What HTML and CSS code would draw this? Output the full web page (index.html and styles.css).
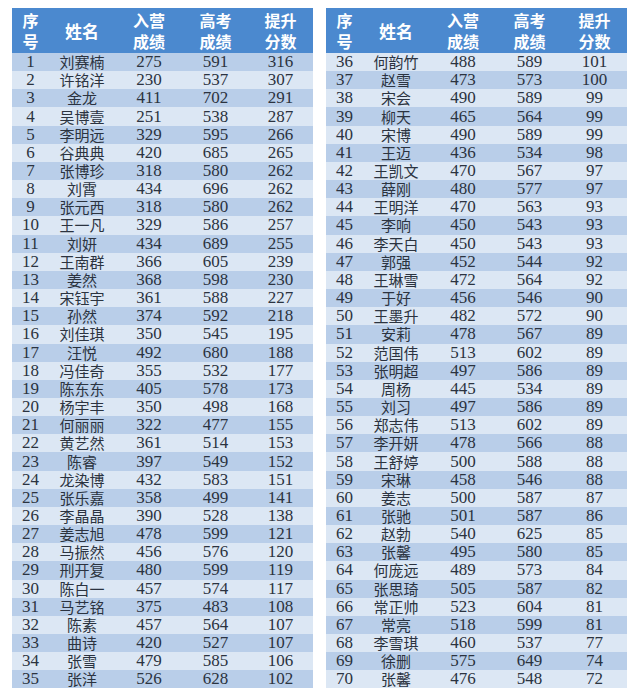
FILE: index.html
```html
<!DOCTYPE html>
<html lang="zh">
<head>
<meta charset="utf-8">
<link rel="stylesheet" href="styles.css">
</head>
<body>
<div class="page">
<table class="tbl">
<colgroup><col class="c1"><col class="c2"><col class="c3"><col class="c4"><col class="c5"></colgroup>
<thead><tr><th>序<br>号</th><th class="one">姓名</th><th>入营<br>成绩</th><th>高考<br>成绩</th><th>提升<br>分数</th></tr></thead>
<tbody>
<tr class="odd"><td>1</td><td class="nm">刘赛楠</td><td>275</td><td>591</td><td>316</td></tr>
<tr><td>2</td><td class="nm">许铭洋</td><td>230</td><td>537</td><td>307</td></tr>
<tr class="odd"><td>3</td><td class="nm">金龙</td><td>411</td><td>702</td><td>291</td></tr>
<tr><td>4</td><td class="nm">吴博壹</td><td>251</td><td>538</td><td>287</td></tr>
<tr class="odd"><td>5</td><td class="nm">李明远</td><td>329</td><td>595</td><td>266</td></tr>
<tr><td>6</td><td class="nm">谷典典</td><td>420</td><td>685</td><td>265</td></tr>
<tr class="odd"><td>7</td><td class="nm">张博珍</td><td>318</td><td>580</td><td>262</td></tr>
<tr><td>8</td><td class="nm">刘霄</td><td>434</td><td>696</td><td>262</td></tr>
<tr class="odd"><td>9</td><td class="nm">张元西</td><td>318</td><td>580</td><td>262</td></tr>
<tr><td>10</td><td class="nm">王一凡</td><td>329</td><td>586</td><td>257</td></tr>
<tr class="odd"><td>11</td><td class="nm">刘妍</td><td>434</td><td>689</td><td>255</td></tr>
<tr><td>12</td><td class="nm">王南群</td><td>366</td><td>605</td><td>239</td></tr>
<tr class="odd"><td>13</td><td class="nm">姜然</td><td>368</td><td>598</td><td>230</td></tr>
<tr><td>14</td><td class="nm">宋钰宇</td><td>361</td><td>588</td><td>227</td></tr>
<tr class="odd"><td>15</td><td class="nm">孙然</td><td>374</td><td>592</td><td>218</td></tr>
<tr><td>16</td><td class="nm">刘佳琪</td><td>350</td><td>545</td><td>195</td></tr>
<tr class="odd"><td>17</td><td class="nm">汪悦</td><td>492</td><td>680</td><td>188</td></tr>
<tr><td>18</td><td class="nm">冯佳奇</td><td>355</td><td>532</td><td>177</td></tr>
<tr class="odd"><td>19</td><td class="nm">陈东东</td><td>405</td><td>578</td><td>173</td></tr>
<tr><td>20</td><td class="nm">杨宇丰</td><td>350</td><td>498</td><td>168</td></tr>
<tr class="odd"><td>21</td><td class="nm">何丽丽</td><td>322</td><td>477</td><td>155</td></tr>
<tr><td>22</td><td class="nm">黄艺然</td><td>361</td><td>514</td><td>153</td></tr>
<tr class="odd"><td>23</td><td class="nm">陈睿</td><td>397</td><td>549</td><td>152</td></tr>
<tr><td>24</td><td class="nm">龙染博</td><td>432</td><td>583</td><td>151</td></tr>
<tr class="odd"><td>25</td><td class="nm">张乐嘉</td><td>358</td><td>499</td><td>141</td></tr>
<tr><td>26</td><td class="nm">李晶晶</td><td>390</td><td>528</td><td>138</td></tr>
<tr class="odd"><td>27</td><td class="nm">姜志旭</td><td>478</td><td>599</td><td>121</td></tr>
<tr><td>28</td><td class="nm">马振然</td><td>456</td><td>576</td><td>120</td></tr>
<tr class="odd"><td>29</td><td class="nm">刑开复</td><td>480</td><td>599</td><td>119</td></tr>
<tr><td>30</td><td class="nm">陈白一</td><td>457</td><td>574</td><td>117</td></tr>
<tr class="odd"><td>31</td><td class="nm">马艺铭</td><td>375</td><td>483</td><td>108</td></tr>
<tr><td>32</td><td class="nm">陈素</td><td>457</td><td>564</td><td>107</td></tr>
<tr class="odd"><td>33</td><td class="nm">曲诗</td><td>420</td><td>527</td><td>107</td></tr>
<tr><td>34</td><td class="nm">张雪</td><td>479</td><td>585</td><td>106</td></tr>
<tr class="odd"><td>35</td><td class="nm">张洋</td><td>526</td><td>628</td><td>102</td></tr>
</tbody>
</table>
<table class="tbl">
<colgroup><col class="c1"><col class="c2"><col class="c3"><col class="c4"><col class="c5"></colgroup>
<thead><tr><th>序<br>号</th><th class="one">姓名</th><th>入营<br>成绩</th><th>高考<br>成绩</th><th>提升<br>分数</th></tr></thead>
<tbody>
<tr><td>36</td><td class="nm">何韵竹</td><td>488</td><td>589</td><td>101</td></tr>
<tr class="odd"><td>37</td><td class="nm">赵雪</td><td>473</td><td>573</td><td>100</td></tr>
<tr><td>38</td><td class="nm">宋会</td><td>490</td><td>589</td><td>99</td></tr>
<tr class="odd"><td>39</td><td class="nm">柳天</td><td>465</td><td>564</td><td>99</td></tr>
<tr><td>40</td><td class="nm">宋博</td><td>490</td><td>589</td><td>99</td></tr>
<tr class="odd"><td>41</td><td class="nm">王迈</td><td>436</td><td>534</td><td>98</td></tr>
<tr><td>42</td><td class="nm">王凯文</td><td>470</td><td>567</td><td>97</td></tr>
<tr class="odd"><td>43</td><td class="nm">薛刚</td><td>480</td><td>577</td><td>97</td></tr>
<tr><td>44</td><td class="nm">王明洋</td><td>470</td><td>563</td><td>93</td></tr>
<tr class="odd"><td>45</td><td class="nm">李响</td><td>450</td><td>543</td><td>93</td></tr>
<tr><td>46</td><td class="nm">李天白</td><td>450</td><td>543</td><td>93</td></tr>
<tr class="odd"><td>47</td><td class="nm">郭强</td><td>452</td><td>544</td><td>92</td></tr>
<tr><td>48</td><td class="nm">王琳雪</td><td>472</td><td>564</td><td>92</td></tr>
<tr class="odd"><td>49</td><td class="nm">于好</td><td>456</td><td>546</td><td>90</td></tr>
<tr><td>50</td><td class="nm">王墨升</td><td>482</td><td>572</td><td>90</td></tr>
<tr class="odd"><td>51</td><td class="nm">安莉</td><td>478</td><td>567</td><td>89</td></tr>
<tr><td>52</td><td class="nm">范国伟</td><td>513</td><td>602</td><td>89</td></tr>
<tr class="odd"><td>53</td><td class="nm">张明超</td><td>497</td><td>586</td><td>89</td></tr>
<tr><td>54</td><td class="nm">周杨</td><td>445</td><td>534</td><td>89</td></tr>
<tr class="odd"><td>55</td><td class="nm">刘习</td><td>497</td><td>586</td><td>89</td></tr>
<tr><td>56</td><td class="nm">郑志伟</td><td>513</td><td>602</td><td>89</td></tr>
<tr class="odd"><td>57</td><td class="nm">李开妍</td><td>478</td><td>566</td><td>88</td></tr>
<tr><td>58</td><td class="nm">王舒婷</td><td>500</td><td>588</td><td>88</td></tr>
<tr class="odd"><td>59</td><td class="nm">宋琳</td><td>458</td><td>546</td><td>88</td></tr>
<tr><td>60</td><td class="nm">姜志</td><td>500</td><td>587</td><td>87</td></tr>
<tr class="odd"><td>61</td><td class="nm">张驰</td><td>501</td><td>587</td><td>86</td></tr>
<tr><td>62</td><td class="nm">赵勃</td><td>540</td><td>625</td><td>85</td></tr>
<tr class="odd"><td>63</td><td class="nm">张馨</td><td>495</td><td>580</td><td>85</td></tr>
<tr><td>64</td><td class="nm">何庞远</td><td>489</td><td>573</td><td>84</td></tr>
<tr class="odd"><td>65</td><td class="nm">张思琦</td><td>505</td><td>587</td><td>82</td></tr>
<tr><td>66</td><td class="nm">常正帅</td><td>523</td><td>604</td><td>81</td></tr>
<tr class="odd"><td>67</td><td class="nm">常亮</td><td>518</td><td>599</td><td>81</td></tr>
<tr><td>68</td><td class="nm">李雪琪</td><td>460</td><td>537</td><td>77</td></tr>
<tr class="odd"><td>69</td><td class="nm">徐删</td><td>575</td><td>649</td><td>74</td></tr>
<tr><td>70</td><td class="nm">张馨</td><td>476</td><td>548</td><td>72</td></tr>
</tbody>
</table>
</div>
</body>
</html>
```
FILE: styles.css
```css
html, body {
  margin: 0;
  padding: 0;
  background: #ffffff;
}
.page {
  display: flex;
  align-items: flex-start;
  gap: 13px;
  padding: 8px 0 0 12px;
}
.tbl {
  width: 301px;
  border-collapse: collapse;
  border-spacing: 0;
  table-layout: fixed;
  color: #2b3340;
  font-family: "Liberation Serif", "Noto Sans CJK SC", serif;
}
.c1 { width: 37px; }
.c2 { width: 66px; }
.c3 { width: 68px; }
.c4 { width: 65px; }
.c5 { width: 65px; }
.tbl th {
  height: 45px;
  padding: 0;
  background: #4b89cf;
  color: #ffffff;
  font-family: "Noto Sans CJK SC", sans-serif;
  font-weight: 700;
  font-size: 16px;
  line-height: 21px;
  text-align: center;
  vertical-align: middle;
}
.tbl th.one {
  font-size: 17px;
}
.tbl td {
  height: 18.17px;
  padding: 0;
  font-size: 17px;
  line-height: 18px;
  text-align: center;
  vertical-align: middle;
  white-space: nowrap;
}
.tbl td.nm {
  font-family: "Noto Sans CJK SC", sans-serif;
  font-size: 15px;
  line-height: 18px;
  font-weight: 400;
}
.tbl tr {
  background: #dce7f4;
}
.tbl tr.odd {
  background: #b9cee9;
}
```
